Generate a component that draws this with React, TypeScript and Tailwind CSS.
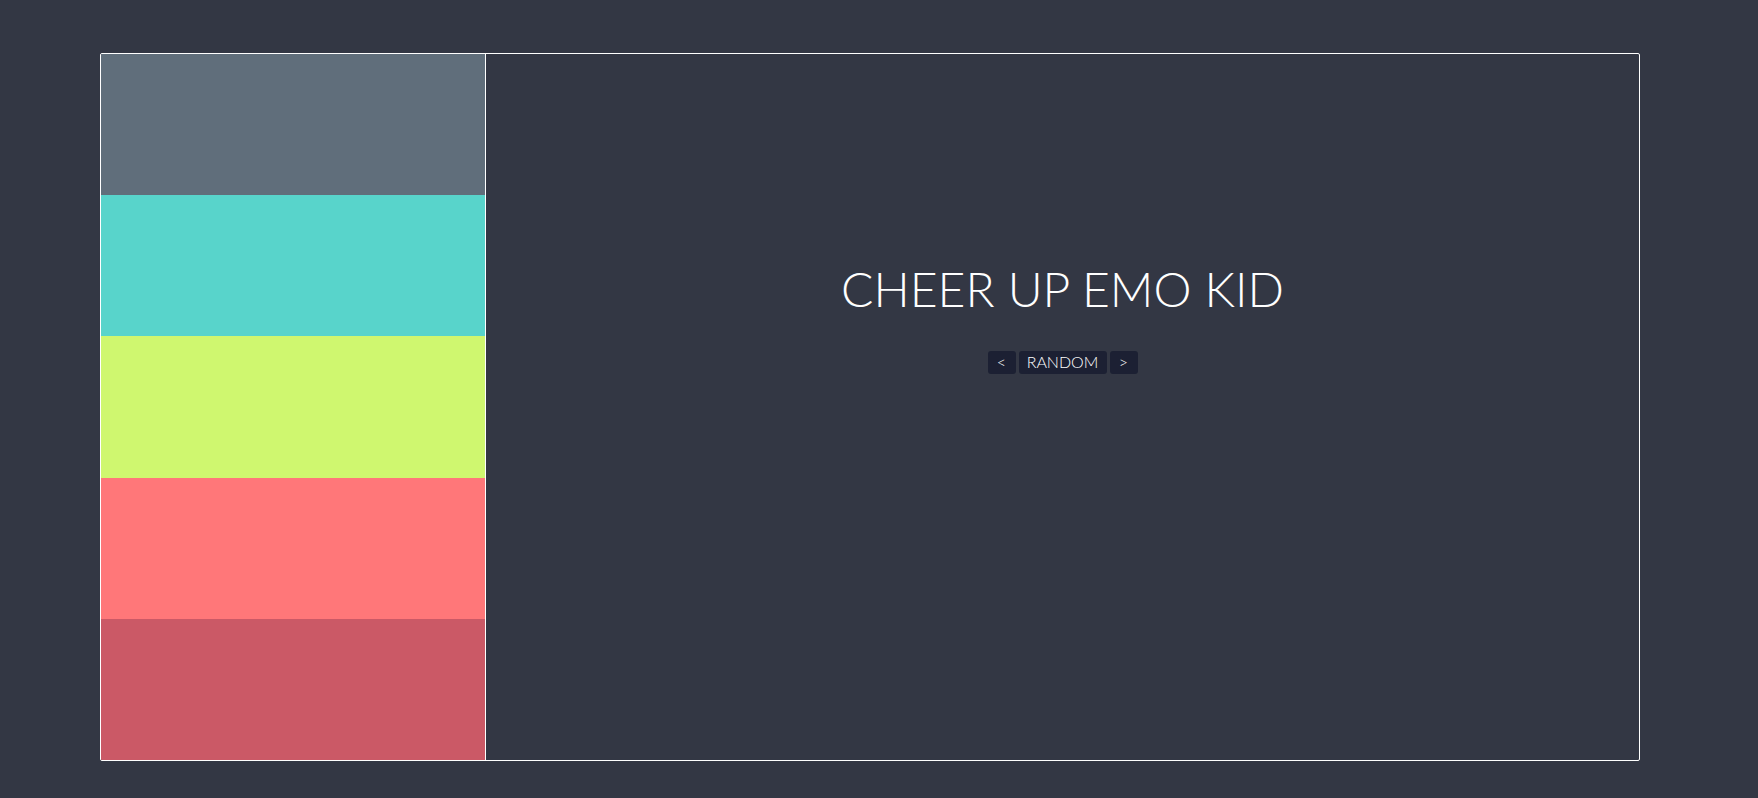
import React from "react";

const bands = ["bg-[#606e7b]", "bg-[#58d4cb]", "bg-[#cff76f]", "bg-[#ff7779]", "bg-[#cb5966]"];

export default function App() {
  return (
    <div
      className="w-full h-[798px] bg-[#333744] pt-[53px] pl-[100px]"
      style={{ fontFamily: "Lato, 'Open Sans', sans-serif" }}
    >
      <div className="w-[1540px] h-[708px] border border-white rounded-[2px] flex overflow-hidden">
        <div className="w-[385px] border-r border-white flex flex-col">
          {bands.map((b, i) => (
            <div key={i} className={`flex-1 ${b}`} />
          ))}
        </div>
        <div className="flex-1 flex flex-col items-center pt-[206px]">
          <h1 className="text-[48px] leading-[1.2] font-light text-white">
            CHEER UP EMO KID
          </h1>
          <div className="mt-[33px] flex gap-[3px]">
            <button className="h-[23px] w-[28px] bg-[#1c2033] text-white text-[16px] font-light rounded-[3px] flex items-center justify-center">
              &lt;
            </button>
            <button className="h-[23px] w-[88px] bg-[#1c2033] text-white text-[16px] font-light rounded-[3px] flex items-center justify-center">
              RANDOM
            </button>
            <button className="h-[23px] w-[28px] bg-[#1c2033] text-white text-[16px] font-light rounded-[3px] flex items-center justify-center">
              &gt;
            </button>
          </div>
        </div>
      </div>
    </div>
  );
}
